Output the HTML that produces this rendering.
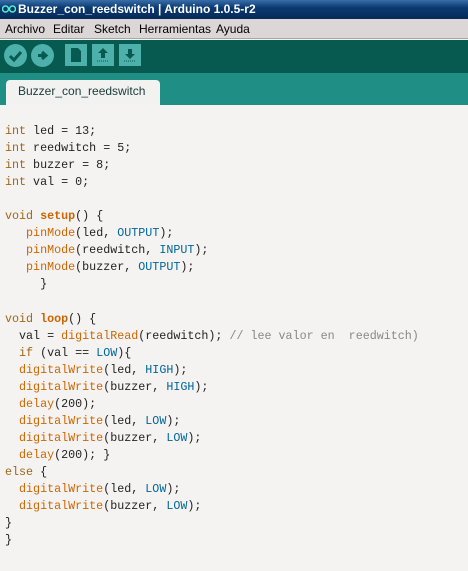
<!DOCTYPE html>
<html><head><meta charset="utf-8"><style>
*{margin:0;padding:0;box-sizing:border-box}
body{width:468px;height:571px;overflow:hidden;background:#f4f3f2;font-family:"Liberation Sans",sans-serif;position:relative}
#title{position:absolute;left:0;top:0;width:468px;height:19px;background:linear-gradient(#3a6ea8,#0a3a72 40%,#062a58);color:#fff;font-weight:bold;font-size:12px;line-height:18px;padding-left:18px}
#title .ic{position:absolute;left:2px;top:5px;width:14px;height:8px}
#menu{position:absolute;left:0;top:19px;width:468px;height:20px;background:#dcd6d6;border-bottom:1px solid #a0a8a8;font-size:12px;line-height:20px;color:#000}
#menu span{position:absolute;top:0}
#tool{position:absolute;left:0;top:40px;width:468px;height:33px;background:#065a50}
#tabs{position:absolute;left:0;top:73px;width:468px;height:32px;background:#1f8f86}
#tab{position:absolute;left:6px;top:7px;width:154px;height:25px;background:#f2f2f0;border-radius:4px 4px 0 0;color:#1a3a3a;font-size:12px;line-height:22px;padding-left:12px}
.c{position:absolute;top:4px;width:23px;height:23px;border-radius:50%;background:#4db0aa}
.s{position:absolute;top:4px;width:22px;height:22px;background:#4db0aa}
pre{position:absolute;left:5px;top:123px;font-family:"Liberation Mono",monospace;font-size:11.7px;line-height:17.04px;color:#222}
.k{color:#a0661a}.f{color:#cc6600}.b{color:#cc6600;font-weight:bold}.n{color:#006699}.m{color:#888}
</style></head><body>
<div id="title"><svg class="ic" viewBox="0 0 14 8"><circle cx="3.5" cy="4" r="3" fill="none" stroke="#5ec" stroke-width="1.5"/><circle cx="10.5" cy="4" r="3" fill="none" stroke="#5ec" stroke-width="1.5"/></svg>Buzzer_con_reedswitch | Arduino 1.0.5-r2</div>
<div id="menu"><span style="left:5px">Archivo</span><span style="left:53px">Editar</span><span style="left:94px">Sketch</span><span style="left:139px">Herramientas</span><span style="left:216px">Ayuda</span></div>
<div id="tool">
<div class="c" style="left:4px"><svg width="23" height="23"><path d="M6 12l4 4 7-8" stroke="#065a50" stroke-width="3" fill="none"/></svg></div>
<div class="c" style="left:31px"><svg width="23" height="23"><path d="M7 11.5h7M11 8l4 3.5-4 3.5" stroke="#065a50" stroke-width="3" fill="none"/></svg></div>
<div class="s" style="left:65px"><svg width="22" height="22"><path d="M6 4h7l3 3v11H6z" fill="#065a50"/></svg></div>
<div class="s" style="left:92px"><svg width="22" height="22"><path d="M11 4l5 5h-3v5h-4V9H6z" fill="#065a50"/><path d="M5 17h12" stroke="#065a50" stroke-dasharray="1 1"/></svg></div>
<div class="s" style="left:119px"><svg width="22" height="22"><path d="M11 15l5-5h-3V5H9v5H6z" fill="#065a50"/><path d="M5 17h12" stroke="#065a50" stroke-dasharray="1 1"/></svg></div>
</div>
<div id="tabs"><div id="tab">Buzzer_con_reedswitch</div></div>
<pre><span class="k">int</span> led = 13;
<span class="k">int</span> reedwitch = 5;
<span class="k">int</span> buzzer = 8;
<span class="k">int</span> val = 0;

<span class="k">void</span> <span class="b">setup</span>() {
   <span class="f">pinMode</span>(led, <span class="n">OUTPUT</span>);
   <span class="f">pinMode</span>(reedwitch, <span class="n">INPUT</span>);
   <span class="f">pinMode</span>(buzzer, <span class="n">OUTPUT</span>);
     }

<span class="k">void</span> <span class="b">loop</span>() {
  val = <span class="f">digitalRead</span>(reedwitch); <span class="m">// lee valor en  reedwitch)</span>
  <span class="k">if</span> (val == <span class="n">LOW</span>){
  <span class="f">digitalWrite</span>(led, <span class="n">HIGH</span>);
  <span class="f">digitalWrite</span>(buzzer, <span class="n">HIGH</span>);
  <span class="f">delay</span>(200);
  <span class="f">digitalWrite</span>(led, <span class="n">LOW</span>);
  <span class="f">digitalWrite</span>(buzzer, <span class="n">LOW</span>);
  <span class="f">delay</span>(200); }
<span class="k">else</span> {
  <span class="f">digitalWrite</span>(led, <span class="n">LOW</span>);
  <span class="f">digitalWrite</span>(buzzer, <span class="n">LOW</span>);
}
}</pre>
</body></html>
